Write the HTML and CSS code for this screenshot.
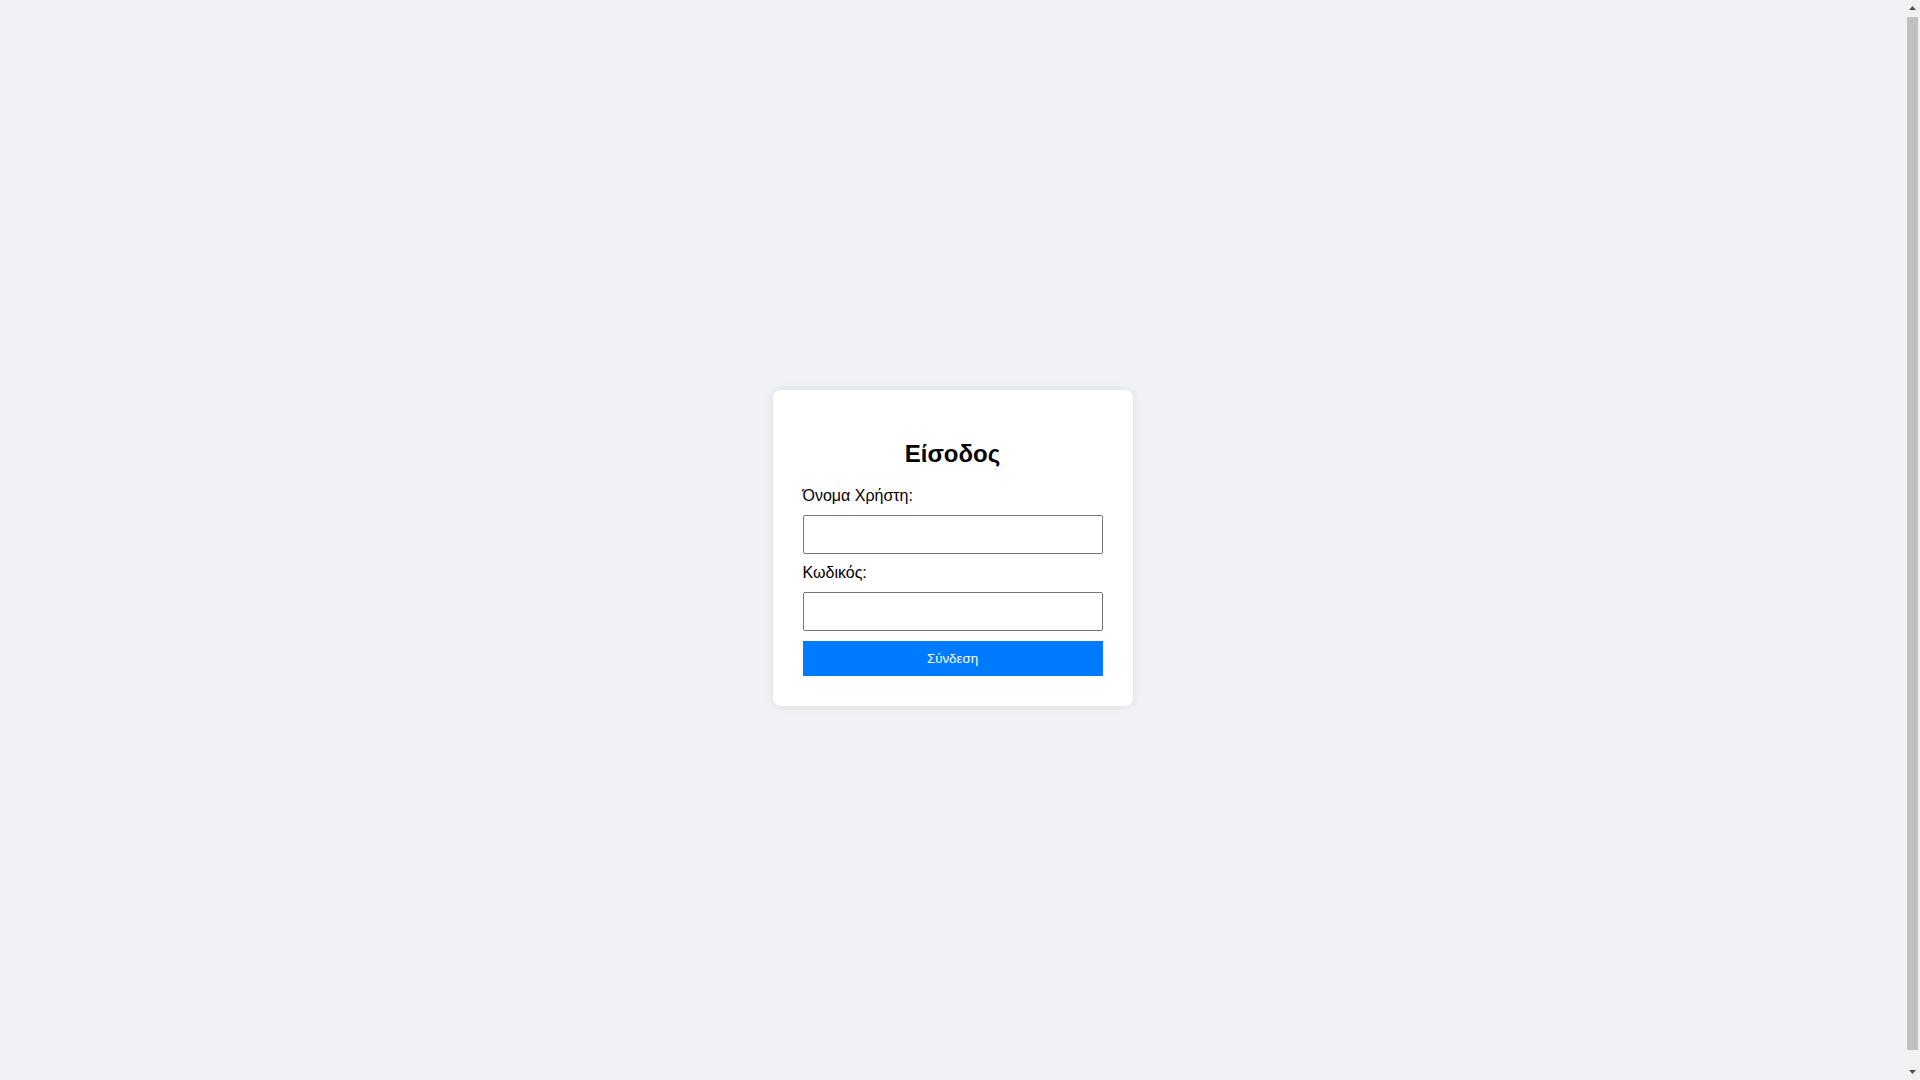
FILE: index.html
```
<!DOCTYPE html>
<html lang="el">
<head>
<meta charset="UTF-8">
<title>Είσοδος</title>
<link rel="stylesheet" href="styles.css">
</head>
<body>
<div class="login-container">
  <h2 class="title">Είσοδος</h2>
  <form class="login-form">
    <label for="username">Όνομα Χρήστη:</label>
    <input type="text" id="username" name="username">
    <label for="password">Κωδικός:</label>
    <input type="password" id="password" name="password">
    <button type="submit">Σύνδεση</button>
  </form>
</div>
<div class="fake-scrollbar" aria-hidden="true">
  <div class="sb-button">
    <svg width="15" height="17" viewBox="0 0 15 17"><path d="M4 10 L7.5 6 L11 10 Z" fill="#505050"/></svg>
  </div>
  <div class="sb-track"><div class="sb-thumb"></div></div>
  <div class="sb-button">
    <svg width="15" height="17" viewBox="0 0 15 17"><path d="M4 7 L7.5 11 L11 7 Z" fill="#505050"/></svg>
  </div>
</div>
</body>
</html>
```
FILE: styles.css
```
html {
  padding-right: 15px;
}
body {
  font-family: "Liberation Sans", Arial, sans-serif;
  background-color: #f0f2f5;
  display: flex;
  justify-content: center;
  align-items: center;
  height: 100vh;
  margin: 8px;
}
.login-container {
  background-color: #ffffff;
  padding: 30px;
  border-radius: 8px;
  box-shadow: 0 0 10px rgba(0, 0, 0, 0.1);
  width: 300px;
}
.title {
  text-align: center;
  font-size: 24px;
  margin: 20px 0 19px;
  color: #000;
}
.login-form {
  margin: 0;
}
.login-form label {
  font-size: 16px;
  color: #000;
}
.login-form input {
  width: 100%;
  padding: 10px;
  margin: 10px 0;
  box-sizing: border-box;
  font-family: "Liberation Sans", Arial, sans-serif;
  font-size: 13.333px;
}
.login-form button {
  width: 100%;
  padding: 10px;
  background-color: #007bff;
  color: #ffffff;
  border: none;
  font-family: "Liberation Sans", Arial, sans-serif;
  font-size: 13.333px;
  cursor: pointer;
}
.fake-scrollbar {
  position: fixed;
  top: 0;
  right: 0;
  width: 15px;
  height: 100vh;
  background: #f1f1f1;
  display: flex;
  flex-direction: column;
}
.sb-button {
  height: 17px;
  flex: none;
}
.sb-button svg {
  display: block;
}
.sb-track {
  flex: 1;
  display: flex;
  flex-direction: column;
}
.sb-thumb {
  height: calc(100% - 13px);
  margin: 0 2px;
  background: #c1c1c1;
}
```
